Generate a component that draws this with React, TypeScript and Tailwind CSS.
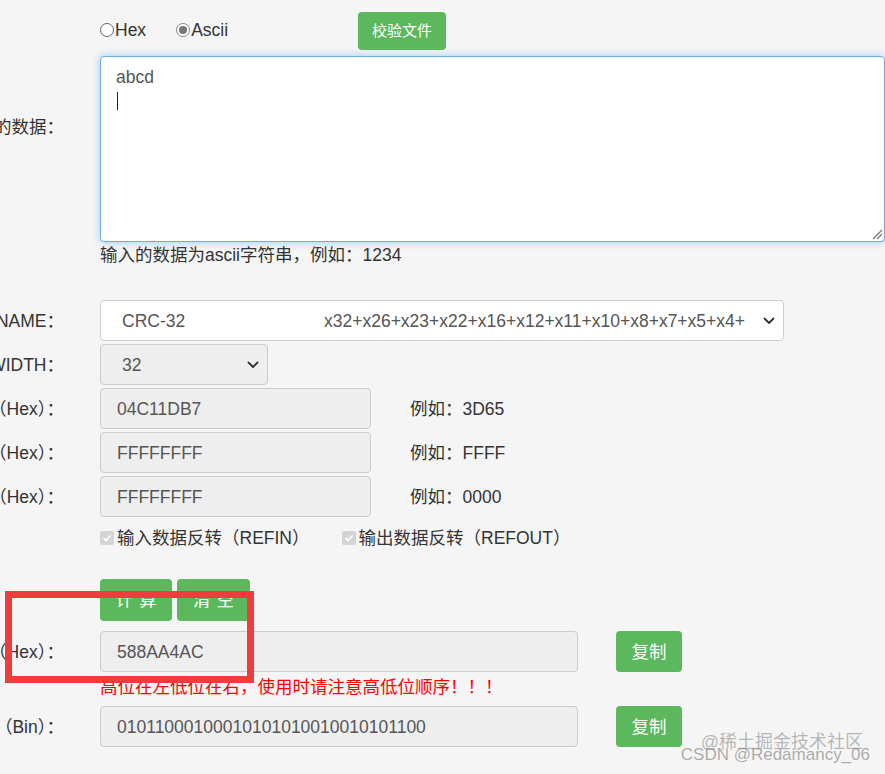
import React from 'react';

const Chevron = ({ className }: { className?: string }) => (
  <svg viewBox="0 0 12 8" className={className} fill="none" stroke="#333" strokeWidth="1.8">
    <path d="M1.5 1.5 L6 6 L10.5 1.5" strokeLinecap="round" strokeLinejoin="round" />
  </svg>
);

const Label = ({ text, className = '' }: { text: string; className?: string }) => (
  <div className={`w-[100px] shrink-0 pr-[36px] flex justify-end overflow-hidden whitespace-nowrap text-[#333] ${className}`}>
    <span>{text}</span>
  </div>
);

const Radio = ({ checked }: { checked?: boolean }) => (
  <span
    className={`inline-flex w-[14px] h-[14px] rounded-full border items-center justify-center bg-white ${
      checked ? 'border-[#888]' : 'border-[#666]'
    }`}
  >
    {checked && <span className="w-[8px] h-[8px] rounded-full bg-[#777]" />}
  </span>
);

const Check = () => (
  <span className="inline-flex w-[14px] h-[14px] rounded-[2px] bg-[#d4d4d4] items-center justify-center">
    <svg viewBox="0 0 10 10" className="w-[10px] h-[10px]" fill="none" stroke="#fff" strokeWidth="1.6">
      <path d="M1.5 5.2 L4 7.5 L8.5 2.5" />
    </svg>
  </span>
);

const GrayInput = ({ value, width }: { value: string; width: string }) => (
  <div className={`${width} h-[41px] flex items-center pl-[16px] bg-[#eeeeee] border border-[#cccccc] rounded-[4px] text-[#555]`}>
    {value}
  </div>
);

const GreenButton = ({ children, className = '' }: { children: React.ReactNode; className?: string }) => (
  <button className={`bg-[#5cb85c] text-white rounded-[4px] flex items-center justify-center ${className}`}>
    {children}
  </button>
);

const App: React.FC = () => {
  const paramRows = [
    { label: '多项式POLY（Hex）：', value: '04C11DB7', example: '例如：3D65' },
    { label: '初始值INIT（Hex）：', value: 'FFFFFFFF', example: '例如：FFFF' },
    { label: '结果异或值XOROUT（Hex）：', value: 'FFFFFFFF', example: '例如：0000' },
  ];

  return (
    <div className="relative w-[885px] h-[774px] overflow-hidden bg-[#f5f5f5] text-[17.5px] leading-[20px] font-['Liberation_Sans','Noto_Sans_CJK_SC',sans-serif]">
      <div className="flex flex-col pt-[12px]">
        {/* input type + verify file */}
        <div className="flex h-[38px]">
          <div className="w-[100px] shrink-0" />
          <div className="flex items-start pt-[8px] text-[#333]">
            <label className="flex items-center">
              <Radio />
              <span className="ml-[1px]">Hex</span>
            </label>
            <label className="flex items-center ml-[30px]">
              <Radio checked />
              <span className="ml-[1px]">Ascii</span>
            </label>
          </div>
          <GreenButton className="ml-[130px] w-[88px] h-[38px] text-[15px]">校验文件</GreenButton>
        </div>

        {/* data textarea */}
        <div className="flex mt-[6px]">
          <Label text="需要校验的数据：" className="mt-[61px] h-[20px]" />
          <div className="relative flex-1 h-[186px] bg-white border border-[#66afe9] rounded-[4px] shadow-[0_0_8px_rgba(102,175,233,0.6)] px-[15px] pt-[10px] text-[#555]">
            <div>abcd</div>
            <div className="mt-[5px] ml-[1px] w-[1px] h-[18px] bg-[#222]" />
            <svg viewBox="0 0 12 12" className="absolute right-[1px] bottom-[1px] w-[12px] h-[12px]" stroke="#777" strokeWidth="1.3">
              <path d="M2 11 L11 2 M6 11 L11 6" />
            </svg>
          </div>
        </div>
        <div className="flex mt-[3px]">
          <div className="w-[100px] shrink-0" />
          <div className="text-[#333]">输入的数据为ascii字符串，例如：1234</div>
        </div>

        {/* NAME */}
        <div className="flex items-center mt-[35px] h-[41px]">
          <Label text="参数模型NAME：" />
          <div className="w-[684px] h-[41px] flex items-center bg-white border border-[#cccccc] rounded-[4px] text-[#555] pl-[21px] pr-[8px]">
            <span className="w-[202px]">CRC-32</span>
            <span className="flex-1 whitespace-nowrap overflow-hidden">x32+x26+x23+x22+x16+x12+x11+x10+x8+x7+x5+x4+</span>
            <Chevron className="w-[12px] h-[8px] ml-[6px]" />
          </div>
        </div>

        {/* WIDTH */}
        <div className="flex items-center mt-[3px] h-[41px]">
          <Label text="宽度WIDTH：" />
          <div className="w-[168px] h-[41px] flex items-center bg-[#eeeeee] border border-[#cccccc] rounded-[4px] text-[#555] pl-[21px] pr-[8px]">
            <span className="flex-1">32</span>
            <Chevron className="w-[12px] h-[8px]" />
          </div>
        </div>

        {paramRows.map((r) => (
          <div key={r.label} className="flex items-center mt-[3px] h-[41px]">
            <Label text={r.label} />
            <GrayInput value={r.value} width="w-[271px]" />
            <span className="ml-[39px] text-[#333]">{r.example}</span>
          </div>
        ))}

        {/* reflect checkboxes */}
        <div className="flex items-center mt-[9px] h-[24px]">
          <div className="w-[100px] shrink-0" />
          <label className="flex items-center text-[#333]">
            <Check />
            <span className="ml-[3px]">输入数据反转（REFIN）</span>
          </label>
          <label className="flex items-center ml-[32px] text-[#333]">
            <Check />
            <span className="ml-[3px]">输出数据反转（REFOUT）</span>
          </label>
        </div>

        {/* actions */}
        <div className="flex mt-[29px] h-[42px]">
          <div className="w-[100px] shrink-0" />
          <GreenButton className="w-[72px] h-[42px] tracking-[6px] pl-[6px]">计算</GreenButton>
          <GreenButton className="ml-[5px] w-[73px] h-[42px] tracking-[6px] pl-[6px]">清空</GreenButton>
        </div>

        {/* hex result */}
        <div className="flex items-center mt-[10px] h-[41px]">
          <Label text="校验计算结果（Hex）：" />
          <GrayInput value="588AA4AC" width="w-[478px]" />
          <GreenButton className="ml-[38px] w-[66px] h-[41px]">复制</GreenButton>
        </div>
        <div className="flex mt-[5px]">
          <div className="w-[100px] shrink-0" />
          <div className="text-[#ff0000]">高位在左低位在右，使用时请注意高低位顺序！！！</div>
        </div>

        {/* bin result */}
        <div className="flex items-center mt-[9px] h-[41px]">
          <Label text="校验计算结果（Bin）：" />
          <GrayInput value="01011000100010101010010010101100" width="w-[478px]" />
          <GreenButton className="ml-[38px] w-[66px] h-[41px]">复制</GreenButton>
        </div>
      </div>

      {/* annotation frame */}
      <div className="absolute left-[5px] top-[591px] w-[249px] h-[92px] border-[7px] border-[#f23b3b]" />

      {/* watermark */}
      <div className="absolute right-[22px] bottom-[22px] text-[18px] leading-[20px] text-[rgba(120,120,120,0.5)]">@稀土掘金技术社区</div>
      <div className="absolute right-[15px] bottom-[9px] text-[17px] leading-[20px] text-[rgba(120,120,120,0.6)]">CSDN @Redamancy_06</div>
    </div>
  );
};

export default App;
